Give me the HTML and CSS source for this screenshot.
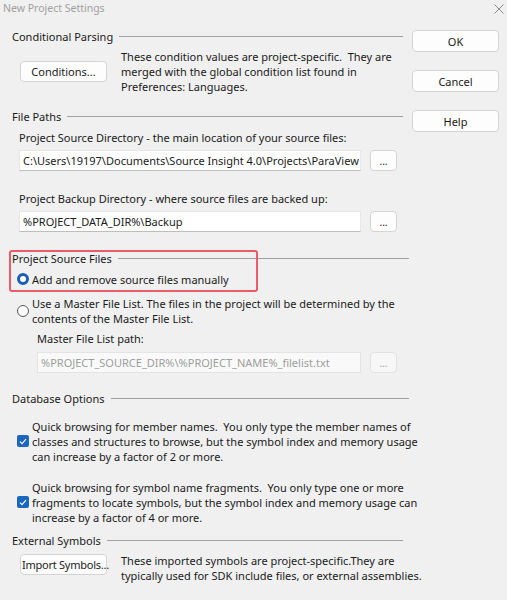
FILE: index.html
```html
<!DOCTYPE html>
<html lang="en">
    <head>
        <meta charset="UTF-8" />
        <meta name="viewport" content="width=device-width, initial-scale=1.0" />
        <title>New Project Settings</title>
        <link rel="stylesheet" href="styles.css">
    </head>
    <body>
        <div class="titlebar">
            <span class="titlebar-text">New Project Settings</span>
            <svg class="titlebar-close" width="10" height="10" viewBox="0 0 10 10">
                <path d="M0.5 0.5 L9.5 9.5 M9.5 0.5 L0.5 9.5" stroke="#8a8a8a" stroke-width="1" fill="none" />
            </svg>
        </div>
        <div class="dialog">
            <div class="main">
                <!-- Conditional Parsing -->
                <div class="group-head group-head-short sec-cond">
                    <span>Conditional Parsing</span><i class="rule"></i>
                </div>
                <div class="desc-row">
                    <button class="btn btn-side" type="button">Conditions...</button>
                    <p class="desc">These condition values are project-specific.&nbsp; They are merged with the global condition list found in Preferences: Languages.</p>
                </div>

                <!-- File Paths -->
                <div class="group-head group-head-short sec-paths">
                    <span>File Paths</span><i class="rule"></i>
                </div>
                <div class="field-label lbl-src">Project Source Directory - the main location of your source files:</div>
                <div class="field-row">
                    <div class="input">C:\Users\19197\Documents\Source Insight 4.0\Projects\ParaView</div>
                    <button class="btn btn-dots" type="button">...</button>
                </div>
                <div class="field-label lbl-bak">Project Backup Directory - where source files are backed up:</div>
                <div class="field-row">
                    <div class="input">%PROJECT_DATA_DIR%\Backup</div>
                    <button class="btn btn-dots" type="button">...</button>
                </div>

                <!-- Project Source Files -->
                <div class="group-head sec-files">
                    <span>Project Source Files</span><i class="rule"></i>
                </div>
                <label class="option opt-manual">
                    <span class="radio radio-on"></span>
                    <span>Add and remove source files manually</span>
                </label>
                <label class="option opt-master">
                    <span class="radio"></span>
                    <span>Use a Master File List. The files in the project will be determined by the contents of the Master File List.</span>
                </label>
                <div class="field-label lbl-master">Master File List path:</div>
                <div class="field-row field-row-indent">
                    <div class="input input-disabled">%PROJECT_SOURCE_DIR%\%PROJECT_NAME%_filelist.txt</div>
                    <button class="btn btn-dots btn-disabled" type="button">...</button>
                </div>
                <div class="highlight"></div>

                <!-- Database Options -->
                <div class="group-head sec-db">
                    <span>Database Options</span><i class="rule"></i>
                </div>
                <label class="option opt-check opt-check1">
                    <span class="check"><svg width="8" height="7" viewBox="0 0 8 7"><path d="M1 3.6 L3 5.6 L7 1.2" stroke="#fff" stroke-width="1.1" fill="none" /></svg></span>
                    <span>Quick browsing for member names.&nbsp; You only type the member names of classes and structures to browse, but the symbol index and memory usage can increase by a factor of 2 or more.</span>
                </label>
                <label class="option opt-check opt-check2">
                    <span class="check"><svg width="8" height="7" viewBox="0 0 8 7"><path d="M1 3.6 L3 5.6 L7 1.2" stroke="#fff" stroke-width="1.1" fill="none" /></svg></span>
                    <span>Quick browsing for symbol name fragments.&nbsp; You only type one or more fragments to locate symbols, but the symbol index and memory usage can increase by a factor of 4 or more.</span>
                </label>

                <!-- External Symbols -->
                <div class="group-head group-head-short sec-ext">
                    <span>External Symbols</span><i class="rule"></i>
                </div>
                <div class="desc-row desc-row-top">
                    <button class="btn btn-side btn-import" type="button">Import Symbols...</button>
                    <p class="desc desc-wide">These imported symbols are project-specific.They are<br>typically used for SDK include files, or external assemblies.</p>
                </div>
            </div>
            <div class="side">
                <button class="btn btn-cmd" type="button">OK</button>
                <button class="btn btn-cmd" type="button">Cancel</button>
                <button class="btn btn-cmd" type="button">Help</button>
            </div>
        </div>
    </body>
</html>
```

FILE: styles.css
```css
html,
body,
p {
    padding: 0;
    margin: 0;
}
body {
    background-color: #f0f0f0;
    color: #1a1a1a;
    font-family: "Noto Sans", "Open Sans", sans-serif;
    font-size: 11px;
    line-height: 15px;
}

.titlebar {
    display: flex;
    align-items: center;
    justify-content: space-between;
    height: 17px;
    padding: 0 3px 0 3px;
}
.titlebar-text {
    color: #a0a0a0;
    font-size: 10.5px;
}

.dialog {
    display: flex;
    flex-flow: row nowrap;
    padding-left: 12px;
}
.main {
    position: relative;
    flex: none;
    width: 397px;
}
.side {
    display: flex;
    flex-flow: column;
    gap: 18px;
    margin-left: 3px;
    padding-top: 13px;
}

.group-head {
    display: flex;
    align-items: center;
    height: 15px;
}
.group-head .rule {
    flex: 1;
    height: 1px;
    margin-left: 6px;
    background-color: #a0a0a0;
}
.group-head-short {
    margin-right: 6px;
}
.sec-cond {
    margin-top: 11.5px;
}
.sec-paths {
    margin-top: 15px;
}
.sec-files {
    margin-top: 18.5px;
}
.sec-db {
    margin-top: 17.5px;
}
.sec-ext {
    margin-top: 8px;
}

.desc-row {
    display: flex;
    align-items: center;
    margin-top: 5px;
}
.desc-row-top {
    align-items: flex-start;
}
.desc {
    flex: none;
    margin-left: 14px;
    width: 276px;
}
.desc-wide {
    width: 340px;
}

.btn {
    flex: none;
    box-sizing: border-box;
    height: 21px;
    padding: 0;
    border: 1px solid #d4d4d4;
    border-radius: 4px;
    background-color: #fdfdfd;
    color: #1a1a1a;
    font-family: inherit;
    font-size: 11px;
    white-space: nowrap;
}
.btn-side {
    width: 87px;
    margin-left: 8px;
}
.btn-import {
    margin-top: 1.5px;
    text-align: left;
    padding-left: 1px;
    letter-spacing: -0.25px;
}
.btn-cmd {
    width: 87px;
    height: 22px;
}
.btn-dots {
    width: 27px;
    margin-left: 9px;
    font-size: 10px;
    line-height: 10px;
}
.btn-disabled {
    color: #a8a8a8;
    border-color: #e2e2e2;
    background-color: #f7f7f7;
}

.field-label {
    padding-left: 7px;
}
.lbl-src {
    margin-top: 6px;
}
.lbl-bak {
    margin-top: 19.5px;
}
.lbl-master {
    margin-top: 5px;
    padding-left: 25px;
}

.field-row {
    display: flex;
    align-items: center;
    margin-top: 5.5px;
    padding-left: 7px;
}
.field-row-indent {
    margin-top: 6.5px;
    padding-left: 25px;
}
.input {
    box-sizing: border-box;
    width: 342px;
    height: 21px;
    padding: 0 3px;
    line-height: 20px;
    white-space: nowrap;
    overflow: hidden;
    border: 1px solid #e6e6e6;
    border-bottom-color: #bdbdbd;
    background-color: #fff;
}
.input-disabled {
    width: 324px;
    color: #9d9d9d;
    background-color: #f9f9f9;
    border-color: #e4e4e4;
}

.option {
    display: flex;
    align-items: center;
    padding-left: 5px;
}
.option > span:last-child {
    margin-left: 3px;
}
.opt-manual {
    margin-top: 6px;
}
.opt-master {
    margin-top: 9px;
}
.opt-check {
    width: 406px;
}
.opt-check1 {
    margin-top: 13px;
}
.opt-check2 {
    margin-top: 16px;
}

.radio {
    flex: none;
    box-sizing: border-box;
    width: 12px;
    height: 12px;
    border: 1px solid #5a5a5a;
    border-radius: 50%;
    background-color: #fafafa;
}
.radio-on {
    border: 3px solid #1a5fb4;
    background-color: #fff;
}
.check {
    flex: none;
    display: flex;
    align-items: center;
    justify-content: center;
    width: 12px;
    height: 12px;
    border-radius: 2px;
    background-color: #1a66c0;
}

.highlight {
    position: absolute;
    left: -3px;
    top: 233px;
    width: 245px;
    height: 38px;
    border: 2px solid #ee5a66;
    border-radius: 3px;
}
```
